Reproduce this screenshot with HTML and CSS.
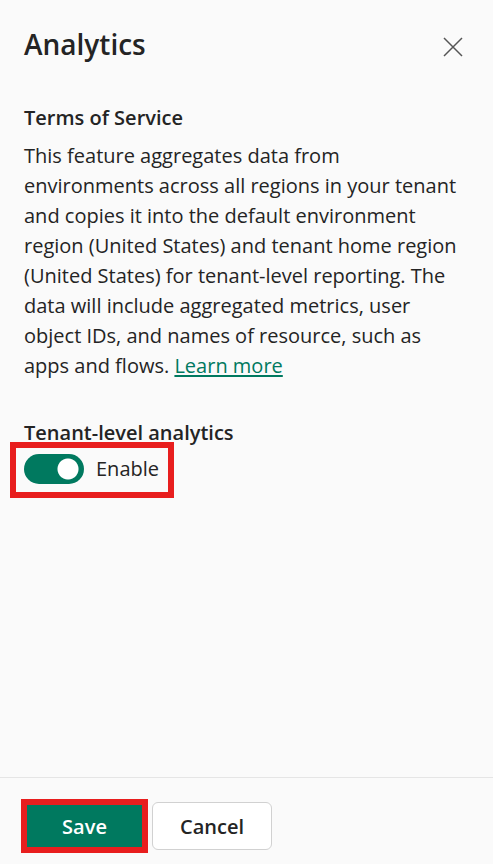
FILE: index.html
```html
<!DOCTYPE html>
<html lang="en">
<head>
<meta charset="utf-8">
<title>Analytics</title>
<link rel="stylesheet" href="styles.css">
</head>
<body>
<main class="panel">
  <header class="panel-header">
    <h1>Analytics</h1>
    <button class="close" type="button" aria-label="Close">
      <svg viewBox="0 0 20 20" width="20" height="20" aria-hidden="true"><path d="M1 1L19 19M19 1L1 19"/></svg>
    </button>
  </header>
  <div class="panel-body">
    <section class="terms">
      <h2>Terms of Service</h2>
      <p>This feature aggregates data from environments across all regions in your tenant and copies it into the default environment region (United States) and tenant home region (United States) for tenant-level reporting. The data will include aggregated metrics, user object IDs, and names of resource, such as apps and flows. <a href="#">Learn more</a></p>
    </section>
    <section class="setting">
      <h2>Tenant-level analytics</h2>
      <label class="toggle">
        <input type="checkbox" role="switch" checked>
        <span>Enable</span>
      </label>
    </section>
  </div>
  <footer class="panel-footer">
    <div class="save-highlight"><button class="button primary" type="button">Save</button></div>
    <button class="button secondary" type="button">Cancel</button>
  </footer>
</main>
</body>
</html>
```

FILE: styles.css
```css
* { box-sizing: border-box; }

body {
  margin: 0;
  background: #fafafa;
  color: #242424;
  font: 20px/30px "Segoe UI", "Open Sans", "Noto Sans", sans-serif;
}

.panel {
  display: flex;
  flex-direction: column;
  min-height: 100vh;
}

.panel-header {
  display: flex;
  justify-content: space-between;
  align-items: flex-end;
  padding: 24px 24px 0;
}

h1, h2, p { margin: 0; }

h1 {
  font-size: 28px;
  line-height: 40px;
  font-weight: 600;
}

h2 {
  font-size: 20px;
  line-height: 30px;
  font-weight: 600;
}

.close {
  display: flex;
  padding: 7px 6px;
  border: 0;
  background: none;
}

.close svg {
  fill: none;
  stroke: #555;
  stroke-width: 1.5;
}

.panel-body {
  flex: 1;
  padding: 39px 24px 0;
}

.terms h2 { margin-bottom: 8px; }

a {
  color: #00795f;
  text-decoration-thickness: 2px;
  text-underline-offset: 2px;
}

.setting { margin-top: 37px; }

.toggle {
  display: inline-flex;
  align-items: center;
  gap: 12px;
  height: 56px;
  margin: -6px 0 0 -14px;
  padding: 0 9px 2px 8px;
  border: 6px solid #e81e1e;
}

.toggle input {
  appearance: none;
  width: 60px;
  height: 30px;
  margin: 0;
  border-radius: 15px;
  background: radial-gradient(circle at 44px 15px, #fff 10px, #00795f 11px);
}

.panel-footer {
  display: flex;
  gap: 4px;
  padding: 21px 21px 11px;
  border-top: 1px solid #e5e5e5;
}

.save-highlight {
  display: flex;
  border: 6px solid #e81e1e;
}

.button {
  font: inherit;
  font-weight: 600;
}

.primary {
  width: 115px;
  height: 42px;
  padding: 2px 0 0;
  border: 0;
  background: #00795f;
  color: #fff;
}

.secondary {
  width: 120px;
  height: 48px;
  margin-top: 3px;
  padding: 2px 0 0;
  border: 1px solid #d1d1d1;
  border-radius: 6px;
  background: #fff;
  color: #242424;
}
```
